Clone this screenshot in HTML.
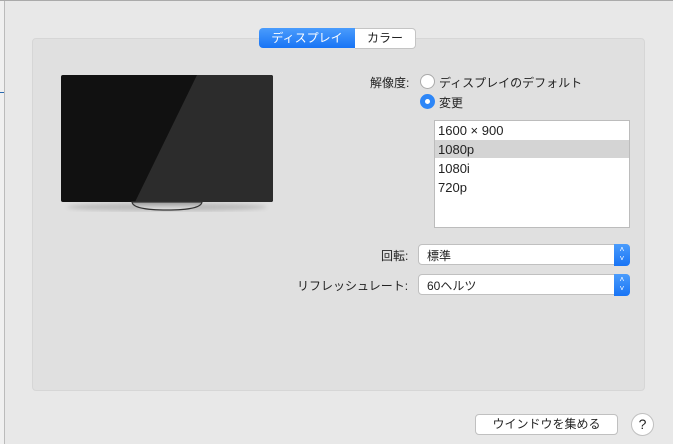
<!DOCTYPE html><html><head><style>
body{margin:0;width:673px;height:444px;background:#e8e8e8;font-family:"Liberation Sans","Noto Sans CJK JP",sans-serif;font-size:12px;color:#222;position:relative;overflow:hidden}
.a{position:absolute}
</style></head><body>
<div class="a" style="left:0;top:0;width:4px;height:444px;background:#f0f0f0;border-right:1px solid #bbb"></div>
<div class="a" style="left:0;top:0;width:673px;height:1px;background:#aaa"></div>
<div class="a" style="left:0;top:92px;width:4px;height:1px;background:#2a6ab0"></div>
<div class="a" style="left:32px;top:38px;width:611px;height:351px;background:#e0e0e0;border:1px solid #d6d6d6;border-radius:4px"></div>
<div class="a" style="left:259px;top:28px;width:96px;height:20px;background:linear-gradient(#4a9cfc,#1874f5);border-radius:4px 0 0 4px;color:#fff;text-align:center;line-height:20px">ディスプレイ</div>
<div class="a" style="left:355px;top:28px;width:60px;height:19px;background:#fff;border:1px solid #c4c4c4;border-left:none;border-radius:0 4px 4px 0;text-align:center;line-height:19px">カラー</div>
<svg class="a" style="left:55px;top:70px" width="225" height="150">
<defs><filter id="b"><feGaussianBlur stdDeviation="2"/></filter><linearGradient id="s" x1="0" y1="0" x2="0" y2="1"><stop offset="0" stop-color="#999"/><stop offset="1" stop-color="#e8e8e8"/></linearGradient></defs>
<ellipse cx="112" cy="137" rx="100" ry="4" fill="#bbb" filter="url(#b)"/>
<rect x="6" y="5" width="212" height="127" rx="2" fill="#111"/>
<path d="M142 5 H216 a2 2 0 0 1 2 2 V130 a2 2 0 0 1 -2 2 H80 Z" fill="#2c2c2c"/>
<path d="M77 132 Q78 140 112 140 Q146 140 147 132 Z" fill="url(#s)" stroke="#333" stroke-width="1.2"/>
</svg>
<div class="a" style="left:370px;top:74px">解像度:</div>
<div class="a" style="left:420px;top:74px;width:13px;height:13px;border:1px solid #aaa;border-radius:50%;background:#fff"></div>
<div class="a" style="left:439px;top:74px">ディスプレイのデフォルト</div>
<div class="a" style="left:420px;top:94px;width:15px;height:15px;border-radius:50%;background:#2d86f7"></div>
<div class="a" style="left:425px;top:99px;width:5px;height:5px;border-radius:50%;background:#fff"></div>
<div class="a" style="left:439px;top:94px">変更</div>
<div class="a" style="left:434px;top:120px;width:194px;height:106px;background:#fff;border:1px solid #bcbcbc"></div>
<div class="a" style="left:435px;top:140px;width:194px;height:18px;background:#d4d4d4"></div>
<div class="a" style="left:438px;top:123px;font-size:13px">1600 × 900</div>
<div class="a" style="left:438px;top:142px;font-size:13px">1080p</div>
<div class="a" style="left:438px;top:161px;font-size:13px">1080i</div>
<div class="a" style="left:438px;top:180px;font-size:13px">720p</div>
<div class="a" style="left:381px;top:247px">回転:</div>
<div class="a" style="left:297px;top:277px">リフレッシュレート:</div>
<div class="a" style="left:418px;top:244px;width:210px;height:19px;background:#fff;border:1px solid #c0c0c0;border-radius:4px"><span style="position:absolute;left:8px;top:2px">標準</span><div style="position:absolute;right:-1px;top:-1px;width:16px;height:21px;background:linear-gradient(#4a9cfc,#1874f5);border-radius:0 4px 4px 0;color:#fff;font-size:8px;text-align:center;line-height:9px;padding-top:1px">˄<br>˅</div></div>
<div class="a" style="left:418px;top:274px;width:210px;height:19px;background:#fff;border:1px solid #c0c0c0;border-radius:4px"><span style="position:absolute;left:8px;top:2px">60ヘルツ</span><div style="position:absolute;right:-1px;top:-1px;width:16px;height:21px;background:linear-gradient(#4a9cfc,#1874f5);border-radius:0 4px 4px 0;color:#fff;font-size:8px;text-align:center;line-height:9px;padding-top:1px">˄<br>˅</div></div>
<div class="a" style="left:475px;top:414px;width:141px;height:19px;background:#fff;border:1px solid #c0c0c0;border-radius:4px;text-align:center;line-height:19px">ウインドウを集める</div>
<div class="a" style="left:631px;top:413px;width:21px;height:21px;background:#fff;border:1px solid #c0c0c0;border-radius:50%;text-align:center;line-height:21px;font-size:14px">?</div>
</body></html>
